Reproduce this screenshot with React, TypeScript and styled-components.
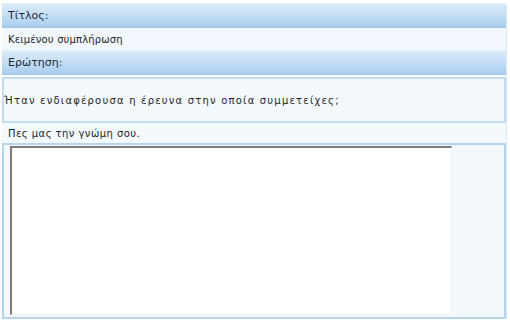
import styled, { createGlobalStyle } from 'styled-components';

const GlobalStyle = createGlobalStyle`
  body {
    margin: 0;
    background: #ffffff;
    font-family: "DejaVu Sans", Verdana, sans-serif;
  }
`;

const Form = styled.div`
  width: 504px;
  margin: 3px 0 0 2px;
  display: flex;
  flex-direction: column;
  border-right: 1px solid #dbe8f4;
`;

const SectionHeader = styled.div`
  height: 23px;
  display: flex;
  align-items: center;
  padding-left: 6px;
  font-size: 11px;
  color: #1e2a36;
  background: linear-gradient(to bottom, #dcebf9 0%, #c4ddf5 50%, #a9cdf0 100%);
  border-top: 1px solid #e6f0fa;
  border-bottom: 1px solid #9fc5ea;
`;

const ValueRow = styled.div`
  height: 22px;
  display: flex;
  align-items: center;
  padding-left: 6px;
  font-size: 10px;
  letter-spacing: 0.15px;
  color: #1e1e1e;
  background: #f2f8fd;
`;

const QuestionBox = styled.div`
  height: 42px;
  margin-top: 2px;
  display: flex;
  align-items: center;
  font-size: 10px;
  letter-spacing: 1.2px;
  color: #1e1e1e;
  background: #f4f9fe;
  border: 2px solid #c3dcf2;
`;

const PromptRow = styled.div`
  height: 20px;
  display: flex;
  align-items: center;
  padding-left: 6px;
  font-size: 10px;
  letter-spacing: 0.45px;
  color: #1e1e1e;
  background: #f4f9fe;
`;

const AnswerBox = styled.div`
  height: 169px;
  padding: 1px 52px 2px 6px;
  background: #f3f8fc;
  border: 2px solid #b7d4ef;
`;

const AnswerInput = styled.textarea`
  display: block;
  width: 100%;
  height: 100%;
  box-sizing: border-box;
  resize: none;
  background: #ffffff;
  border: none;
  border-top: 2px solid #7a7a7a;
  border-left: 2px solid #7a7a7a;
  border-bottom: 1px solid #f0f0f0;
  border-right: 1px solid #f0f0f0;
  outline: none;
  font-family: "DejaVu Sans", Verdana, sans-serif;
  font-size: 10px;
`;

export default function App() {
  return (
    <>
      <GlobalStyle />
      <Form>
        <SectionHeader>Τίτλος:</SectionHeader>
        <ValueRow>Κειμένου συμπλήρωση</ValueRow>
        <SectionHeader>Ερώτηση:</SectionHeader>
        <QuestionBox>Ήταν ενδιαφέρουσα η έρευνα στην οποία συμμετείχες;</QuestionBox>
        <PromptRow>Πες μας την γνώμη σου.</PromptRow>
        <AnswerBox>
          <AnswerInput />
        </AnswerBox>
      </Form>
    </>
  );
}
